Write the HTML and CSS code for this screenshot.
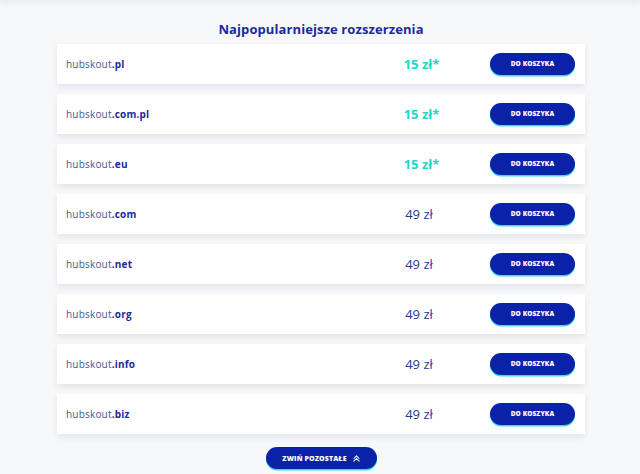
FILE: index.html
```html
<!DOCTYPE html>
<html lang="pl">
<head>
<meta charset="utf-8">
<title>Najpopularniejsze rozszerzenia</title>
<link rel="stylesheet" href="styles.css">
</head>
<body>
<div class="topbar"></div>
<main class="section">
  <h2 class="title">Najpopularniejsze rozszerzenia</h2>
  <ul class="list">
    <li class="card"><span class="domain">hubskout<b>.pl</b></span><span class="price promo">15 zł*</span><button class="btn">DO KOSZYKA</button></li>
    <li class="card"><span class="domain">hubskout<b>.com.pl</b></span><span class="price promo">15 zł*</span><button class="btn">DO KOSZYKA</button></li>
    <li class="card"><span class="domain">hubskout<b>.eu</b></span><span class="price promo">15 zł*</span><button class="btn">DO KOSZYKA</button></li>
    <li class="card"><span class="domain">hubskout<b>.com</b></span><span class="price">49 zł</span><button class="btn">DO KOSZYKA</button></li>
    <li class="card"><span class="domain">hubskout<b>.net</b></span><span class="price">49 zł</span><button class="btn">DO KOSZYKA</button></li>
    <li class="card"><span class="domain">hubskout<b>.org</b></span><span class="price">49 zł</span><button class="btn">DO KOSZYKA</button></li>
    <li class="card"><span class="domain">hubskout<b>.info</b></span><span class="price">49 zł</span><button class="btn">DO KOSZYKA</button></li>
    <li class="card"><span class="domain">hubskout<b>.biz</b></span><span class="price">49 zł</span><button class="btn">DO KOSZYKA</button></li>
  </ul>
  <button class="btn btn-more">ZWIŃ POZOSTAŁE
    <svg class="chev" viewBox="0 0 8 8" width="7" height="7" aria-hidden="true"><path d="M1 4 L4 1 L7 4 M1 7 L4 4 L7 7" fill="none" stroke="#ffffff" stroke-width="1.2" stroke-linecap="round" stroke-linejoin="round"/></svg>
  </button>
</main>
</body>
</html>
```
FILE: styles.css
```css
* { box-sizing: border-box; }
html, body { margin: 0; padding: 0; }
body {
  background: #f7f8fa;
  font-family: "Open Sans", "Liberation Sans", sans-serif;
  width: 640px;
  height: 474px;
  overflow: hidden;
}
.topbar {
  height: 0;
  box-shadow: 0 0 6px 1px rgba(0, 0, 0, 0.18);
}
.section {
  display: flex;
  flex-direction: column;
  align-items: center;
  padding-top: 20px;
  padding-left: 2px;
}
.title {
  margin: 0;
  font-size: 13px;
  line-height: 18px;
  font-weight: 700;
  letter-spacing: 0.1px;
  color: #1b2a9c;
}
.list {
  list-style: none;
  margin: 6px 0 0;
  padding: 0;
  width: 528px;
  display: flex;
  flex-direction: column;
  gap: 10px;
}
.card {
  height: 40px;
  background: #ffffff;
  display: grid;
  grid-template-columns: 1fr 100px 85px;
  column-gap: 20px;
  align-items: center;
  padding: 0 10px 0 9px;
  box-shadow: 0 3px 6px rgba(20, 30, 60, 0.09);
}
.domain {
  font-size: 10px;
  color: #4b5596;
  letter-spacing: 0.2px;
}
.domain b {
  color: #1b2a9c;
  font-weight: 700;
}
.price {
  text-align: center;
  font-size: 13px;
  color: #2b3794;
  padding-right: 2px;
}
.price.promo {
  color: #1fd6c6;
  font-weight: 700;
  padding-left: 5px;
}
.btn {
  border: 0;
  height: 22px;
  border-radius: 11px;
  background: #0a22a8;
  color: #ffffff;
  font-family: "Open Sans", "Liberation Sans", sans-serif;
  font-size: 6.5px;
  font-weight: 800;
  letter-spacing: 0.1px;
  box-shadow: 0 1.5px 0 #2fdfe9;
  padding: 0;
  cursor: pointer;
}
.card .btn { margin-top: -1px; }
.btn-more {
  margin-top: 13px;
  width: 111px;
  height: 22px;
  display: flex;
  align-items: center;
  justify-content: center;
  gap: 6px;
  font-size: 7px;
}
.chev { display: block; }
```
